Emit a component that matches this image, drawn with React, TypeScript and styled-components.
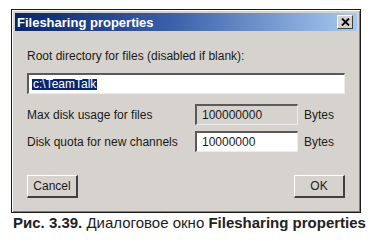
import React from "react";
import styled, { createGlobalStyle } from "styled-components";

const GlobalStyle = createGlobalStyle`
  html, body {
    margin: 0;
    padding: 0;
    background: #ffffff;
  }
  body {
    font-family: "Liberation Sans", Arial, sans-serif;
  }
`;

const Page = styled.div`
  display: flex;
  flex-direction: column;
  padding: 9px 0 0 11px;
  width: 370px;
  height: 249px;
  box-sizing: border-box;
`;

const Window = styled.div`
  width: 350px;
  height: 204px;
  box-sizing: border-box;
  background: #d6d3ce;
  border: 1px solid #1a1a1a;
  box-shadow: inset 1px 1px 0 #ffffff, inset -1px -1px 0 #808080;
  padding: 3px 3px 0 3px;
  display: flex;
  flex-direction: column;
`;

const TitleBar = styled.div`
  height: 18px;
  display: flex;
  align-items: center;
  justify-content: space-between;
  padding: 0 4px 0 2px;
  background: linear-gradient(to right, #0a246a 0%, #3a5fa8 45%, #a6caf0 100%);
`;

const Title = styled.span`
  color: #ffffff;
  font-family: "Liberation Sans", Arial, sans-serif;
  font-weight: bold;
  font-size: 13px;
`;

const CloseButton = styled.div`
  width: 16px;
  height: 14px;
  box-sizing: border-box;
  background: #d6d3ce;
  border-top: 1px solid #ffffff;
  border-left: 1px solid #ffffff;
  border-right: 1px solid #404040;
  border-bottom: 1px solid #404040;
  display: flex;
  align-items: center;
  justify-content: center;
`;

const Body = styled.div`
  flex: 1;
  display: flex;
  flex-direction: column;
  padding: 18px 12px 0 12px;
`;

const Label = styled.div`
  font-size: 12px;
  color: #1a1a1a;
  height: 14px;
  line-height: 14px;
  white-space: nowrap;
`;

const Field = styled.div<{ $disabled?: boolean }>`
  box-sizing: border-box;
  height: 21px;
  display: flex;
  align-items: center;
  padding: 0 5px;
  font-size: 12px;
  color: #1a1a1a;
  background: ${(p) => (p.$disabled ? "#d6d3ce" : "#ffffff")};
  border-top: 2px solid #5a5a5a;
  border-left: 2px solid #5a5a5a;
  border-right: 1px solid #ececec;
  border-bottom: 1px solid #ececec;
`;

const PathField = styled(Field)`
  margin-top: 10px;
  padding-left: 3px;
`;

const Selected = styled.span`
  background: #0a246a;
  color: #ffffff;
  padding: 0 1px;
  line-height: 11px;
`;

const Row = styled.div<{ $top: number }>`
  display: grid;
  grid-template-columns: 162px 103px auto;
  align-items: center;
  column-gap: 6px;
  margin-top: ${(p) => p.$top}px;
`;

const Unit = styled.span`
  font-size: 12px;
  color: #1a1a1a;
`;

const Buttons = styled.div`
  display: flex;
  justify-content: space-between;
  margin-top: 23px;
`;

const Button = styled.div`
  width: 51px;
  height: 23px;
  box-sizing: border-box;
  display: flex;
  align-items: center;
  justify-content: center;
  font-size: 12px;
  color: #1a1a1a;
  background: #d6d3ce;
  border-top: 1px solid #ffffff;
  border-left: 1px solid #ffffff;
  border-right: 2px solid #404040;
  border-bottom: 2px solid #404040;
`;

const Caption = styled.div`
  margin-top: 1px;
  margin-left: 2px;
  font-family: "Liberation Sans", Arial, sans-serif;
  font-size: 15px;
  color: #222222;
  white-space: nowrap;
`;

const Bold = styled.b`
  font-weight: bold;
`;

function CloseIcon() {
  return (
    <svg width="9" height="8" viewBox="0 0 9 8">
      <path d="M1 0.5 L8 7.5 M8 0.5 L1 7.5" stroke="#000" strokeWidth="1.8" />
    </svg>
  );
}

export default function App() {
  return (
    <>
      <GlobalStyle />
      <Page>
        <Window>
          <TitleBar>
            <Title>Filesharing properties</Title>
            <CloseButton>
              <CloseIcon />
            </CloseButton>
          </TitleBar>
          <Body>
            <Label>Root directory for files (disabled if blank):</Label>
            <PathField>
              <Selected>c:\TeamTalk</Selected>
            </PathField>
            <Row $top={10}>
              <Label>Max disk usage for files</Label>
              <Field $disabled>100000000</Field>
              <Unit>Bytes</Unit>
            </Row>
            <Row $top={6}>
              <Label>Disk quota for new channels</Label>
              <Field>10000000</Field>
              <Unit>Bytes</Unit>
            </Row>
            <Buttons>
              <Button>Cancel</Button>
              <Button>OK</Button>
            </Buttons>
          </Body>
        </Window>
        <Caption>
          <Bold>Рис. 3.39.</Bold> Диалоговое окно <Bold>Filesharing properties</Bold>
        </Caption>
      </Page>
    </>
  );
}
